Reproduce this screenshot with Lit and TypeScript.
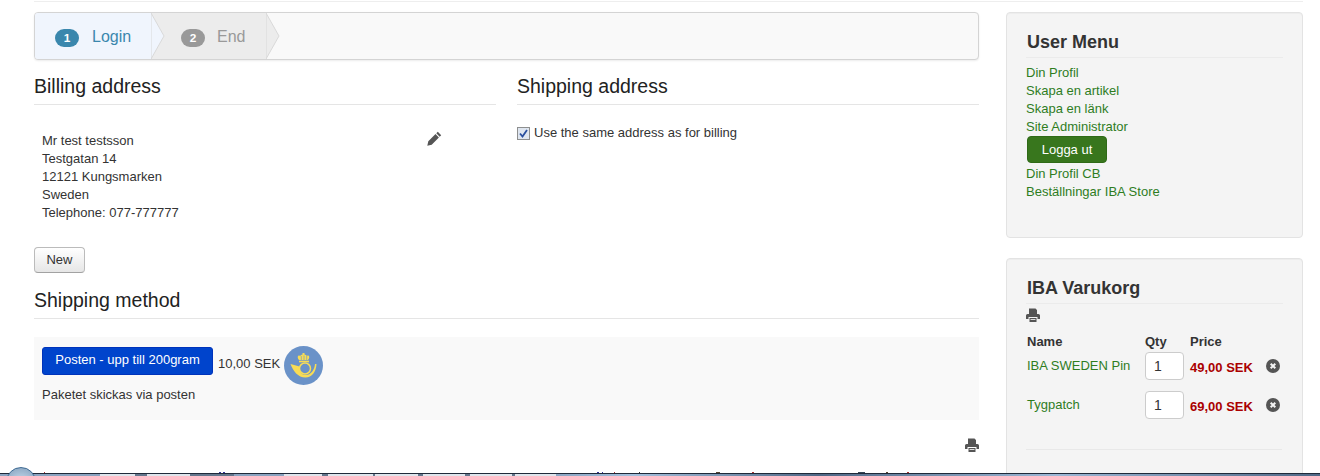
import { LitElement, html, css, svg } from "lit";
import { customElement } from "lit/decorators.js";

const printer = (w: number, h: number) => html`<svg class="print" width=${w} height=${h} viewBox="0 0 14 14"><path fill="#555" fill-rule="evenodd" d="M3 0.500h6.500L11 2v4H3zM1.500 6h11A1.500 1.500 0 0 1 14 7.500V11h-2.500V9h-9v2H0V7.500A1.500 1.500 0 0 1 1.500 6zM3.500 10h7v4h-7z"/><rect x="4.500" y="11" width="5" height="1" fill="#ddd"/></svg>`;

const removeIcon = html`<svg class="rm" width="14" height="14" viewBox="0 0 14 14"><circle cx="7" cy="7" r="7" fill="#555"/><path d="M4.700 4.700l4.600 4.600M9.300 4.700l-4.600 4.600" stroke="#f4f4f4" stroke-width="2"/></svg>`;

const arrow = (fill: string) => svg`<polygon points="0,0 13,23.500 0,47" fill=${fill} stroke="#d9d9d9" stroke-width="1"/>`;

const taskSegments = [
  [100, "b"], [35, "w"], [12, "s"], [43, "w"], [44, "s"], [50, "b"], [38, "w"], [6, "s"], [45, "w"], [2, "s"], [43, "w"], [5, "s"], [42, "w"], [5, "s"], [42, "w"], [3, "s"], [41, "w"],
] as [number, string][];

const cutText = [[44, 1, "#a33"], [219, 2, "#339"], [223, 2, "#339"], [597, 2, "#339"], [602, 1, "#339"], [614, 1, "#a33"], [639, 1, "#333"], [716, 4, "#543"], [752, 2, "#a33"], [858, 7, "#345"], [886, 2, "#543"], [907, 2, "#a33"]] as [number, number, string][];

@customElement("app-root")
export class AppRoot extends LitElement {
  static styles = css`
    :host { display: block; position: relative; height: 476px; overflow: hidden; background: #fff; font-family: "Liberation Sans", Arial, sans-serif; font-size: 13px; line-height: 18px; color: #333; }
    .page { margin: 0 17px 0 34px; }
    .topline { border-top: 1px solid #fff; background: #eee; height: 1px; margin-bottom: 10px; }
    .cols { display: flex; gap: 27px; align-items: flex-start; }
    main { width: 945px; flex: none; }
    aside { width: 297px; flex: none; display: flex; flex-direction: column; gap: 20px; }
    .steps { display: flex; height: 46px; border: 1px solid #d4d4d4; border-radius: 4px; background: #f9f9f9; box-shadow: 0 1px 2px rgba(0,0,0,.08); overflow: hidden; }
    .step { display: flex; align-items: center; font-size: 16px; flex: none; box-sizing: border-box; }
    .step.a { width: 116px; background: #f0f5fd; color: #3a87ad; padding-left: 20px; }
    .step.b { width: 101px; background: #ececec; color: #999; padding-left: 16px; }
    .badge { width: 24px; height: 18px; border-radius: 9px; margin-right: 13px; margin-top: 4px; color: #fff; font-size: 11.844px; font-weight: bold; display: flex; align-items: center; justify-content: center; flex: none; }
    .a .badge { background: #3a87ad; }
    .b .badge { background: #999; margin-right: 12px; }
    .label { margin-top: 2px; }
    .arrow { flex: none; display: block; }
    .arrow.one { background: #ececec; }
    .two-cols { display: flex; gap: 21px; margin-top: 8px; }
    .two-cols > div { width: 462px; }
    h3 { margin: 0; font-size: 19.5px; font-weight: normal; line-height: 36px; height: 36px; border-bottom: 1px solid #e5e5e5; color: #222; }
    .addr-row { display: flex; justify-content: space-between; padding: 27px 54px 0 8px; }
    .pencil { display: block; margin-top: -1px; }
    .addr-lines { height: 115px; }
    .same { display: flex; align-items: center; gap: 4px; margin-top: 19px; height: 18px; }
    .btn-new { display: block; box-sizing: border-box; width: 51px; height: 26px; border: 1px solid #bbb; border-bottom-color: #a2a2a2; border-radius: 4px; background: linear-gradient(#fff, #e6e6e6); color: #333; font: inherit; padding: 0; text-align: center; }
    .ship-head { margin-top: 9px; }
    .panel { margin-top: 18px; height: 83px; background: #f9f9f9; padding: 10px 8px 0; box-sizing: border-box; }
    .method { display: flex; align-items: flex-start; }
    .btn-post { box-sizing: border-box; width: 171px; height: 28px; background: #04c; border: 1px solid #03b; border-radius: 3px; color: #fff; font: inherit; padding: 0 0 2px; text-align: center; }
    .fee { margin-left: 5px; margin-top: 8px; margin-right: 4px; }
    .logo { display: block; margin-top: -1px; }
    .desc { margin-top: 1px; }
    .print-row { display: flex; justify-content: flex-end; margin-top: 18px; }
    .print { display: block; }
    .card { box-sizing: border-box; background: #f4f4f4; border: 1px solid #e3e3e3; border-radius: 4px; padding: 19px 19px 0; box-shadow: inset 0 1px 1px rgba(0,0,0,.03); }
    .card.menu { height: 226px; }
    .card.cart { height: 260px; }
    h4 { margin: 0 0 6px; padding-left: 1px; font-size: 18px; font-weight: bold; line-height: 20px; height: 26px; border-bottom: 1px solid #ebebeb; color: #333; box-sizing: border-box; }
    a { color: #2f7d1f; text-decoration: none; display: block; }
    .btn-out { display: block; box-sizing: border-box; width: 80px; height: 27px; margin: 0 0 2px 1px; background: #38761d; border: 1px solid #2f6a17; border-radius: 4px; color: #fff; font: inherit; padding: 0; text-align: center; }
    .cart-print { height: 18px; margin-top: -2px; }
    .row { display: grid; grid-template-columns: 118px 45px 76px 14px; align-items: center; padding-left: 1px; }
    .row.head { font-weight: bold; height: 18px; margin-top: 7px; margin-bottom: 1px; }
    .row.item { height: 28px; margin-bottom: 11px; }
    .row .rm { display: block; }
    .qty { box-sizing: border-box; width: 39px; height: 28px; border: 1px solid #ccc; border-radius: 4px; background: #fff; padding-left: 8px; line-height: 26px; color: #333; font-size: 14px; }
    .price { color: #a00; font-weight: bold; position: relative; top: 2px; }
    .cart hr { border: 0; border-top: 1px solid #e8e8e8; margin: 30px 1px 0 0; }
    .taskbar { position: absolute; left: 0; right: 0; top: 473px; height: 3px; display: flex; background: linear-gradient(90deg, #5e7694, #9db8d6 12%, #4f6785 28%, #a4bfdc 48%, #4f6785 62%, #9db8d6 80%, #4f6785); border-top: 1px solid #1f2a3a; box-sizing: border-box; }
    .seg { flex: none; height: 100%; }
    .seg.w { background: #dfe5ec; }
    .seg.b { background: #8aa3c0; }
    .seg.s { background: #64768c; }
    .orb { position: absolute; left: 6px; top: 467px; width: 30px; height: 30px; border-radius: 50%; background: radial-gradient(circle at 50% 60%, #c9574d 0 24%, #b9cfe3 30%, #7d9bb8 100%); border: 1px solid #3d6a93; box-sizing: border-box; }
    .cut { position: absolute; top: 472px; height: 1px; }
  `;

  render() {
    return html`
      <div class="page">
        <div class="topline"></div>
        <div class="cols">
          <main>
            <div class="steps">
              <div class="step a"><span class="badge">1</span><span class="label">Login</span></div>
              <svg class="arrow one" width="14" height="46" viewBox="0 0 14 47" preserveAspectRatio="none">${arrow("#f0f5fd")}</svg>
              <div class="step b"><span class="badge">2</span><span class="label">End</span></div>
              <svg class="arrow" width="14" height="46" viewBox="0 0 14 47" preserveAspectRatio="none">${arrow("#ececec")}</svg>
            </div>
            <div class="two-cols">
              <div>
                <h3>Billing address</h3>
                <div class="addr-row">
                  <div class="addr-lines">Mr test testsson<br />Testgatan 14<br />12121 Kungsmarken<br />Sweden<br />Telephone: 077-777777</div>
                  <svg class="pencil" width="15" height="15" viewBox="0 0 15 15"><path fill="#555" d="M10.800 0.800l3.400 3.400-1.500 1.500-3.400-3.400zM8.500 3.100l3.400 3.400-7.200 7.200-4.400 1.100 1-4.500z"/></svg>
                </div>
                <button class="btn-new">New</button>
              </div>
              <div>
                <h3>Shipping address</h3>
                <label class="same">
                  <svg width="13" height="13" viewBox="0 0 13 13"><rect x=".5" y=".5" width="12" height="12" fill="#dfe6f0" stroke="#8e8f8f"/><path d="M3 6.500l2.500 3L10 3" fill="none" stroke="#2a4f9e" stroke-width="1.800"/></svg>
                  Use the same address as for billing
                </label>
              </div>
            </div>
            <h3 class="ship-head">Shipping method</h3>
            <div class="panel">
              <div class="method">
                <button class="btn-post">Posten - upp till 200gram</button>
                <span class="fee">10,00 SEK</span>
                <svg class="logo" width="39" height="39" viewBox="0 0 39 39">
                  <circle cx="19.500" cy="19.500" r="19.500" fill="#6a92c8"/>
                  <path fill="#f8dc55" d="M15 14c-1.500-2-1.600-3.600-.7-4.300.7-.5 1.500-.3 2 .3.400-.9 1.200-1.300 2.200-1.400V7h2v1.600c1 .1 1.800.5 2.200 1.400.5-.6 1.300-.8 2-.3.900.7.800 2.300-.7 4.300z"/>
                  <rect x="15" y="14.700" width="10" height="1.600" fill="#f8dc55"/>
                  <path stroke="#6a92c8" stroke-width=".6" d="M17.300 10v4M20 9.500V14M22.700 10v4"/>
                  <path fill="#f8dc55" d="M32.500 18C32 26 28 31.500 21.500 31.500 14 31.500 9 25 6.500 18L15.500 20.500C15 26 18 29 21.500 29 27 29 30.500 24 31 18Z"/>
                  <circle cx="21" cy="22.500" r="5.500" fill="none" stroke="#f8dc55" stroke-width="1.500"/>
                </svg>
              </div>
              <div class="desc">Paketet skickas via posten</div>
            </div>
            <div class="print-row">${printer(14, 14)}</div>
          </main>
          <aside>
            <section class="card menu">
              <h4>User Menu</h4>
              <a>Din Profil</a>
              <a>Skapa en artikel</a>
              <a>Skapa en länk</a>
              <a>Site Administrator</a>
              <button class="btn-out">Logga ut</button>
              <a>Din Profil CB</a>
              <a>Beställningar IBA Store</a>
            </section>
            <section class="card cart">
              <h4>IBA Varukorg</h4>
              <div class="cart-print">${printer(14, 14)}</div>
              <div class="row head"><span>Name</span><span>Qty</span><span>Price</span><span></span></div>
              <div class="row item"><a>IBA SWEDEN Pin</a><div class="qty">1</div><span class="price">49,00 SEK</span>${removeIcon}</div>
              <div class="row item"><a>Tygpatch</a><div class="qty">1</div><span class="price">69,00 SEK</span>${removeIcon}</div>
              <hr />
            </section>
          </aside>
        </div>
      </div>
      ${cutText.map(([x, w, c]) => html`<i class="cut" style="left:${x}px;width:${w}px;background:${c}"></i>`)}
      <div class="taskbar">${taskSegments.map(([w, k]) => html`<div class="seg ${k}" style="width:${w}px"></div>`)}</div>
      <div class="orb"></div>
    `;
  }
}
